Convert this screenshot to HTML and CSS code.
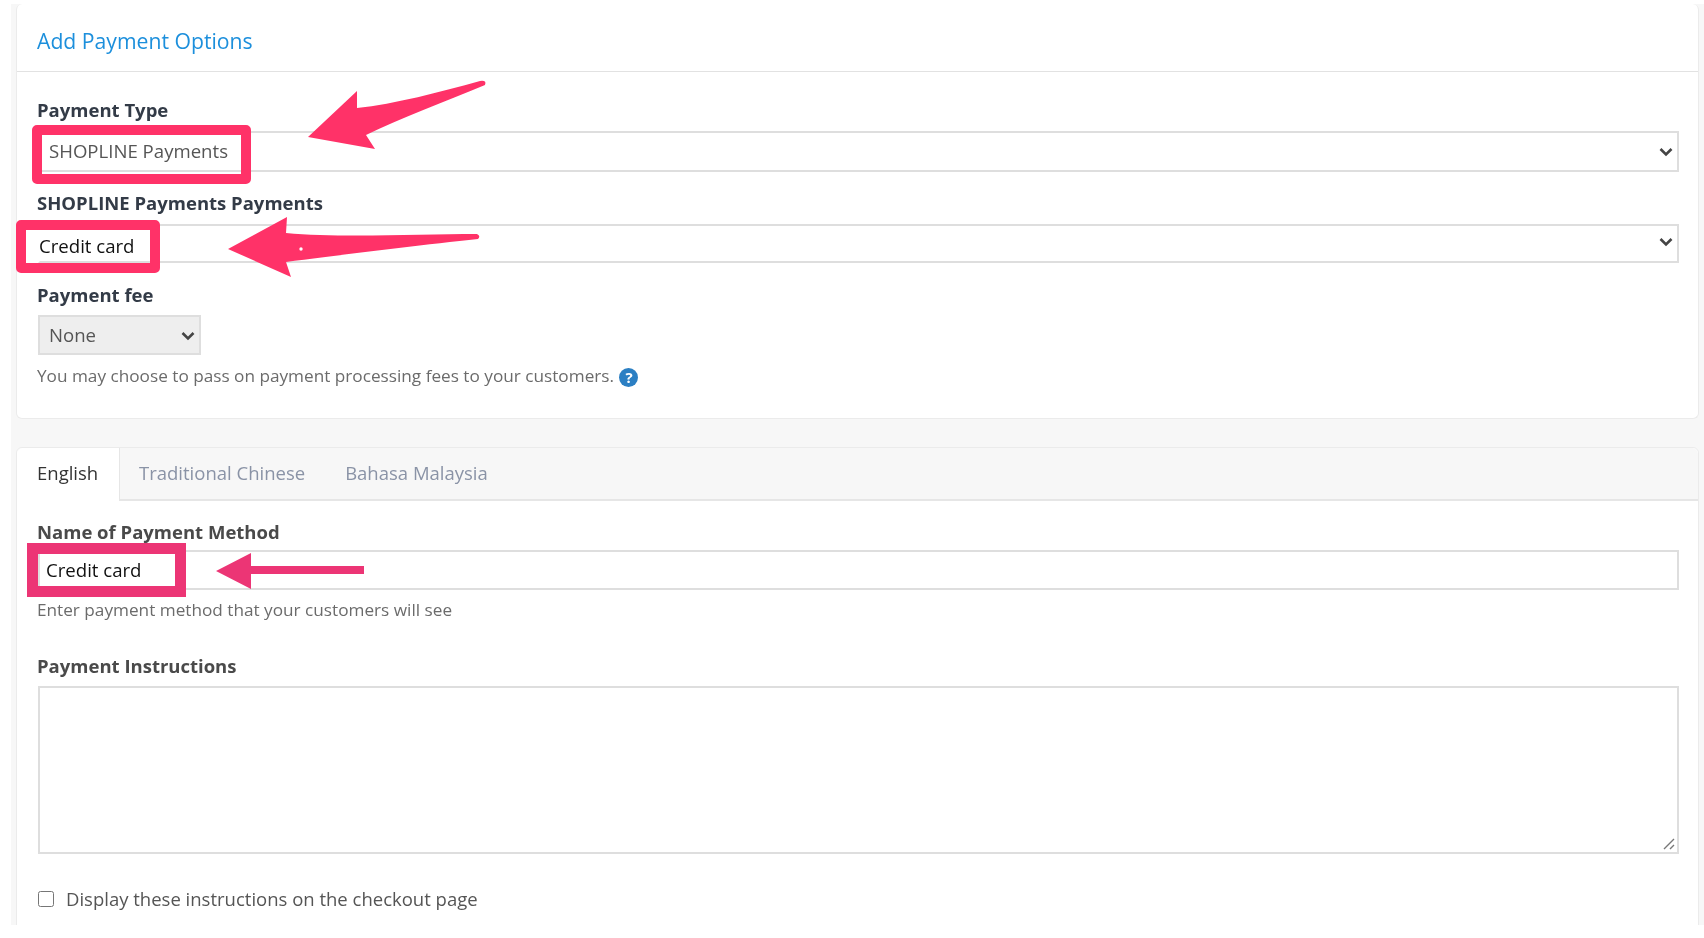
FILE: index.html
```html
<!DOCTYPE html>
<html lang="en">
<head>
<meta charset="utf-8">
<title>Add Payment Options</title>
<link rel="stylesheet" href="styles.css">
</head>
<body>
<div class="page">
  <main class="panel">
    <section class="card card-top">
      <header class="card-head"><h1 class="title">Add Payment Options</h1></header>
      <div class="card-body">
        <label class="label">Payment Type</label>
        <select class="control select sel-type"><option>SHOPLINE Payments</option></select>
        <label class="label label-sub">SHOPLINE Payments Payments</label>
        <select class="control select sel-method"><option>Credit card</option></select>
        <label class="label label-fee">Payment fee</label>
        <select class="control select sel-fee"><option>None</option></select>
        <p class="help help-fee">You may choose to pass on payment processing fees to your customers. <span class="qmark">?</span></p>
      </div>
    </section>
    <section class="card card-lang">
      <nav class="tabs">
        <span class="tab tab-active">English</span>
        <span class="tab">Traditional Chinese</span>
        <span class="tab">Bahasa Malaysia</span>
      </nav>
      <div class="lang-body">
        <label class="label label-dim">Name of Payment Method</label>
        <input class="control input-name" type="text" value="Credit card">
        <p class="help help-name">Enter payment method that your customers will see</p>
        <label class="label label-dim label-instr">Payment Instructions</label>
        <textarea class="control area"></textarea>
        <label class="check-row"><input class="check" type="checkbox"><span>Display these instructions on the checkout page</span></label>
      </div>
    </section>
  </main>

  <div class="mark mark-type"></div>
  <div class="mark mark-method"></div>
  <div class="mark mark-name"></div>
  <svg class="arrows" width="1704" height="938" viewBox="0 0 1704 938" aria-hidden="true">
    <path fill="#ff3268" d="M308 137 L357 91 L357 108 C395 104 440 92 480 81 Q487 80 485 85 C445 102 400 118 366 135 L375 149 Z"/>
    <path fill="#ff3268" d="M228 249 L287 217 L286 233 C340 238 420 234 477 234 Q481 236 478 239 C420 245 340 255 286 262 L291 277 Z"/>
    <circle cx="301" cy="249" r="1.7" fill="#fff"/>
    <path fill="#ec3575" d="M216 571 L251 553 L251 566 L364 566 L364 574 L251 574 L251 589 Z"/>
  </svg>
</div>
</body>
</html>
```
FILE: styles.css
```css
* { box-sizing: border-box; }
html, body { margin: 0; padding: 0; background: #fff; }
body { font-family: "Open Sans", "Liberation Sans", sans-serif; color: #555; overflow: hidden; }
.page { position: relative; width: 1704px; height: 938px; overflow: hidden; filter: blur(0.45px); }

.panel { margin: 4px 0 0 11px; height: 921px; padding: 0 5px; background: #f7f7f7; overflow: hidden; }

.card { background: #fff; border: 1px solid #ebebeb; border-radius: 6px; }
.card-top { height: 415px; border-top: 0; }
.card-lang { margin-top: 28px; height: 600px; }

.card-head { height: 68px; padding: 6px 20px 0; display: flex; align-items: center; border-bottom: 1px solid #e2e2e2; }
.title { margin: 0; font-size: 21.2px; font-weight: 400; color: #1c8fdc; }

.card-body { padding: 26px 19px 0 20px; }
.lang-body { padding: 19px 19px 0 20px; }

.label { display: block; height: 24px; line-height: 24px; font-size: 18.5px; font-weight: 700; color: #333b47; }
.label-dim { color: #4a4a4a; }
.label-sub { margin-top: 19px; }
.label-fee { margin-top: 20px; }
.label-instr { margin-top: 32px; }

.control { display: block; margin-left: 1px; border: 2px solid #dedede; border-radius: 0; background-color: #fff; font-family: inherit; font-size: 18.6px; color: #555; outline: 0; }
.select { appearance: none; -webkit-appearance: none; background-image: url("data:image/svg+xml,%3Csvg xmlns='http://www.w3.org/2000/svg' width='14' height='10' viewBox='0 0 14 10'%3E%3Cpath d='M1.5 2 L7 7.5 L12.5 2' fill='none' stroke='%23444' stroke-width='2.6'/%3E%3C/svg%3E"); background-repeat: no-repeat; background-position: right 4px center; }
.sel-type { width: calc(100% - 1px); height: 41px; margin-top: 9px; padding: 0 0 3px 9px; }
.sel-method { width: calc(100% - 1px); height: 39px; margin-top: 9px; padding: 4px 0 0 0; text-indent: -1px; color: #111; border-left-color: transparent; background-position: right 4px top 11px; }
.sel-fee { width: 163px; height: 40px; margin-top: 8px; padding: 0 0 2px 9px; background-color: #eee; background-position: right 4px top 14px; }
.input-name { width: calc(100% - 1px); height: 40px; margin-top: 6px; padding: 0 6px 2px; color: #111; }
.area { width: calc(100% - 1px); height: 168px; margin-top: 8px; resize: none; background-image: url("data:image/svg+xml,%3Csvg xmlns='http://www.w3.org/2000/svg' width='12' height='12' viewBox='0 0 12 12'%3E%3Cpath d='M1 11 L11 1 M7 11 L11 7' stroke='%23777' stroke-width='1.4' fill='none'/%3E%3C/svg%3E"); background-repeat: no-repeat; background-position: right 2px bottom 2px; }

.help { margin: 0; height: 24px; line-height: 24px; font-size: 17.2px; color: #6b6b6b; }
.help-fee { margin-top: 9px; }
.help-name { margin-top: 8px; }
.qmark { display: inline-block; width: 19px; height: 19px; margin-left: 1px; border-radius: 50%; background: #2b7fc3; color: #fff; font-size: 15px; font-weight: 700; line-height: 19px; text-align: center; vertical-align: -1px; }

.tabs { display: flex; height: 53px; padding-bottom: 2px; background: #f7f7f7; border-bottom: 2px solid #e6e6e6; border-radius: 6px 6px 0 0; font-size: 18.5px; }
.tab { display: flex; align-items: center; padding: 0 20px; color: #8a93a6; }
.tab-active { width: 103px; background: #fff; color: #333; border-right: 1px solid #e6e6e6; margin-bottom: -4px; padding-bottom: 4px; margin-right: -1px; border-radius: 6px 0 0 0; }

.check-row { display: flex; align-items: center; gap: 12px; margin-top: 32px; height: 24px; font-size: 18.5px; color: #555; }
.check { width: 16px; height: 16px; margin: 2px 0 0 1px; }

.mark { position: absolute; pointer-events: none; }
.mark-type { left: 32px; top: 125px; width: 219px; height: 59px; border: 10px solid #ff3268; border-radius: 5px; }
.mark-method { left: 16px; top: 220px; width: 144px; height: 53px; border: 10px solid #ff3268; border-radius: 5px; }
.mark-name { left: 27px; top: 543px; width: 159px; height: 54px; border: 11px solid #ec3575; }
.arrows { position: absolute; left: 0; top: 0; pointer-events: none; }
```
